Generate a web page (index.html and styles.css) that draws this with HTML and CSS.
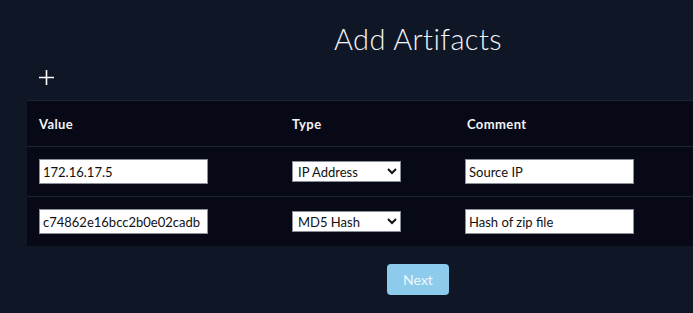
FILE: index.html
```html
<!DOCTYPE html>
<html lang="en">
<head>
    <meta charset="UTF-8">
    <meta name="viewport" content="width=device-width, initial-scale=1.0">
    <title>Add Artifacts</title>
    <link rel="stylesheet" href="styles.css">
</head>
<body>
    <div class="page">
        <h1 class="page-title">Add Artifacts</h1>

        <button class="add-row" type="button" aria-label="Add artifact">
            <svg width="17" height="17" viewBox="0 0 17 17">
                <path d="M8.5 1v15M1 8.5h15" stroke="#fff" stroke-width="1.6" fill="none"/>
            </svg>
        </button>

        <table class="artifacts">
            <thead>
                <tr>
                    <th class="col-value">Value</th>
                    <th class="col-type">Type</th>
                    <th>Comment</th>
                </tr>
            </thead>
            <tbody>
                <tr>
                    <td><input class="field" type="text" value="172.16.17.5"></td>
                    <td>
                        <select class="type-select">
                            <option selected>IP Address</option>
                            <option>MD5 Hash</option>
                        </select>
                    </td>
                    <td><input class="field" type="text" value="Source IP"></td>
                </tr>
                <tr>
                    <td><input class="field" type="text" value="c74862e16bcc2b0e02cadb"></td>
                    <td>
                        <select class="type-select">
                            <option>IP Address</option>
                            <option selected>MD5 Hash</option>
                        </select>
                    </td>
                    <td><input class="field" type="text" value="Hash of zip file"></td>
                </tr>
            </tbody>
        </table>

        <div class="actions">
            <button class="next-btn" type="button">Next</button>
        </div>
    </div>
</body>
</html>
```

FILE: styles.css
```css
:root {
    --page-bg: #0f1726;
    --table-bg: #070a16;
    --line: #1c2436;
    --text: #f2f4f8;
    --accent: #8ccbec;
}

html, body {
    overflow: hidden;
}

body {
    margin: 0;
    background: var(--page-bg);
    color: var(--text);
    font-family: Lato, 'Open Sans', sans-serif;
    height: 313px;
}

.page {
    width: 782px;
    padding-left: 27px;
}

.page-title {
    margin: 0;
    padding-top: 16px;
    height: 45px;
    font-family: Lato, 'Open Sans', sans-serif;
    font-size: 29px;
    font-weight: 300;
    line-height: 45px;
    text-align: center;
    letter-spacing: 0.4px;
}

.add-row {
    display: block;
    margin: 8px 0 0 11px;
    padding: 0;
    width: 17px;
    height: 17px;
    background: none;
    border: none;
    cursor: pointer;
}

.add-row svg {
    display: block;
}

.artifacts {
    margin-top: 14px;
    width: 100%;
    border-collapse: collapse;
    background: var(--table-bg);
    border-top: 1px solid var(--line);
}

.artifacts th {
    height: 45px;
    padding: 0 12px;
    text-align: left;
    font-size: 13px;
    font-weight: 700;
    letter-spacing: 0.4px;
    border-bottom: 1px solid var(--line);
}

.col-value {
    width: 229px;
}

.col-type {
    width: 151px;
}

.artifacts td {
    height: 49px;
    padding: 0 12px;
    border-bottom: 1px solid var(--line);
}

.artifacts tbody tr:last-child td {
    border-bottom: none;
}

.field {
    box-sizing: border-box;
    width: 169px;
    height: 25px;
    padding: 0 3px;
    border: 1px solid #8a8f99;
    background: #fff;
    color: #111;
    font-family: Lato, 'Open Sans', sans-serif;
    font-size: 13px;
    display: block;
}

td:last-child .field {
    margin-left: -2px;
}

.type-select {
    box-sizing: border-box;
    width: 109px;
    height: 21px;
    padding: 0 1px;
    border: 1px solid #8a8f99;
    border-radius: 0;
    background: #fff;
    color: #111;
    font-family: Lato, 'Open Sans', sans-serif;
    font-size: 13px;
    display: block;
}

.actions {
    display: flex;
    justify-content: center;
    padding-top: 18px;
}

.next-btn {
    width: 62px;
    height: 31px;
    border: none;
    border-radius: 4px;
    background: var(--accent);
    color: #eef7fc;
    font-family: Lato, 'Open Sans', sans-serif;
    font-size: 14px;
    cursor: pointer;
}
```
